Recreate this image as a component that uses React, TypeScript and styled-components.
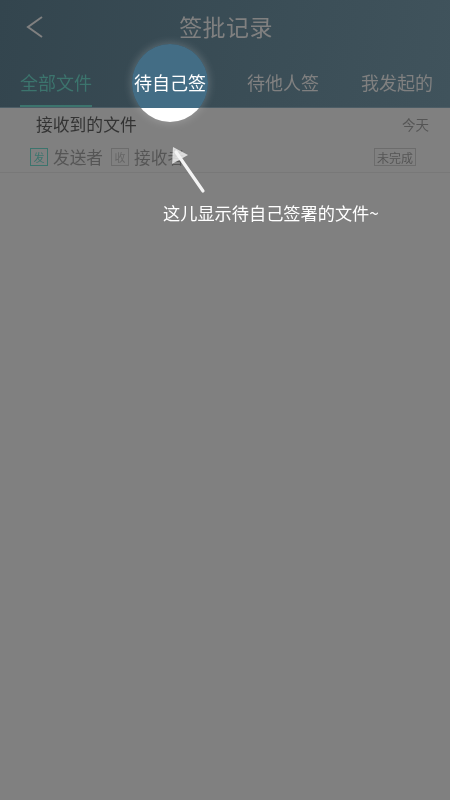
import styled, { createGlobalStyle } from "styled-components";

const GlobalStyle = createGlobalStyle`
    html, body {
        margin: 0;
        padding: 0;
        background: #808080;
    }
    body {
        font-family: "Noto Sans CJK SC", "Liberation Sans", sans-serif;
    }
`;

const Page = styled.div`
    position: relative;
    width: 450px;
    height: 800px;
    overflow: hidden;
    background: #808080;
    filter: blur(0.35px);
`;
const Header = styled.header`
    height: 108px;
    box-sizing: border-box;
    background: linear-gradient(100deg, #33454e 0%, #3a4d56 55%, #40535c 100%);
    border-bottom: 1px solid #4c5d66;
`;
const TitleBar = styled.div`
    position: relative;
    z-index: 2;
    height: 52px;
    display: flex;
    align-items: center;
    justify-content: center;
`;
const BackIcon = styled.svg`
    position: absolute;
    left: 25px;
    top: 15px;
    width: 20px;
    height: 24px;
`;
const Title = styled.h1`
    margin: 0;
    font-size: 23px;
    font-weight: 400;
    color: #808080;
    letter-spacing: 0.4px;
    padding-left: 2px;
`;
const Tabs = styled.nav`
    position: relative;
    z-index: 2;
    height: 55px;
    display: grid;
    grid-template-columns: 114px 113px 114px 1fr;
    padding-left: 20px;
`;
const Tab = styled.div<{ $state?: "active" | "lit" }>`
    height: 55px;
    box-sizing: border-box;
    width: 72px;
    padding-top: 17px;
    font-size: 18px;
    line-height: 26px;
    white-space: nowrap;
    color: ${(p) => (p.$state === "active" ? "#3c746d" : p.$state === "lit" ? "#ffffff" : "#808080")};
    border-bottom: ${(p) => (p.$state === "active" ? "2px solid #3c746d" : "none")};
`;
const Spotlight = styled.div`
    position: absolute;
    left: 132px;
    top: 44px;
    width: 76px;
    height: 78px;
    border-radius: 50%;
    z-index: 1;
    background: linear-gradient(180deg, #436d85 0, #436d85 64px, #ffffff 64px);
    box-shadow: 0 0 8px 1px rgba(255, 255, 255, 0.2);
`;
const Row = styled.section`
    position: relative;
    z-index: 2;
    height: 65px;
    box-sizing: border-box;
    padding: 4px 34px 0 30px;
    border-bottom: 1px solid #787878;
    display: flex;
    flex-direction: column;
`;
const RowTop = styled.div`
    display: flex;
    justify-content: space-between;
    align-items: center;
    height: 24px;
    padding-left: 6px;
    margin-right: -13px;
`;
const FileName = styled.span`
    font-size: 16.8px;
    color: #333333;
`;
const Time = styled.span`
    font-size: 13.5px;
    color: #555555;
`;
const RowBottom = styled.div`
    display: flex;
    align-items: center;
    height: 24px;
    margin-top: 9px;
`;
const Badge = styled.span<{ $teal?: boolean }>`
    width: 18px;
    height: 18px;
    box-sizing: border-box;
    display: flex;
    align-items: center;
    justify-content: center;
    font-size: 11px;
    color: ${(p) => (p.$teal ? "#3c746d" : "#666666")};
    border: 1px solid ${(p) => (p.$teal ? "#3c746d" : "#6c6c6c")};
`;
const Person = styled.span`
    font-size: 16.7px;
    color: #555555;
    margin-left: 5px;
    margin-right: 8px;
`;
const Status = styled.span`
    margin-left: auto;
    width: 42px;
    height: 18px;
    box-sizing: border-box;
    display: flex;
    align-items: center;
    justify-content: center;
    font-size: 12px;
    color: #555555;
    border: 1px solid #6c6c6c;
`;
const Arrow = styled.svg`
    position: absolute;
    left: 165px;
    top: 140px;
    width: 46px;
    height: 58px;
    z-index: 3;
`;
const Hint = styled.p`
    position: absolute;
    left: 163px;
    top: 201px;
    margin: 0;
    z-index: 3;
    font-size: 17.2px;
    line-height: 24px;
    color: #ffffff;
    white-space: nowrap;
`;

export default function App() {
    return (
        <Page>
            <GlobalStyle />
            <Header>
                <TitleBar>
                    <BackIcon viewBox="0 0 20 24" fill="none">
                        <path d="M17 2 L3 12 L17 22" stroke="#808080" strokeWidth="2" />
                    </BackIcon>
                    <Title>签批记录</Title>
                </TitleBar>
                <Tabs>
                    <Tab $state="active">全部文件</Tab>
                    <Tab $state="lit">待自己签</Tab>
                    <Tab>待他人签</Tab>
                    <Tab>我发起的</Tab>
                </Tabs>
            </Header>
            <Spotlight />
            <Row>
                <RowTop>
                    <FileName>接收到的文件</FileName>
                    <Time>今天</Time>
                </RowTop>
                <RowBottom>
                    <Badge $teal>发</Badge>
                    <Person>发送者</Person>
                    <Badge>收</Badge>
                    <Person>接收者</Person>
                    <Status>未完成</Status>
                </RowBottom>
            </Row>
            <Arrow viewBox="0 0 46 58" fill="none">
                <path d="M38 51 L11 12" stroke="#f4f4f4" strokeWidth="3.2" strokeLinecap="round" />
                <path d="M8 7 L23 15 L7 24 Z" fill="#f4f4f4" fillOpacity="0.8" />
            </Arrow>
            <Hint>这儿显示待自己签署的文件~</Hint>
        </Page>
    );
}
